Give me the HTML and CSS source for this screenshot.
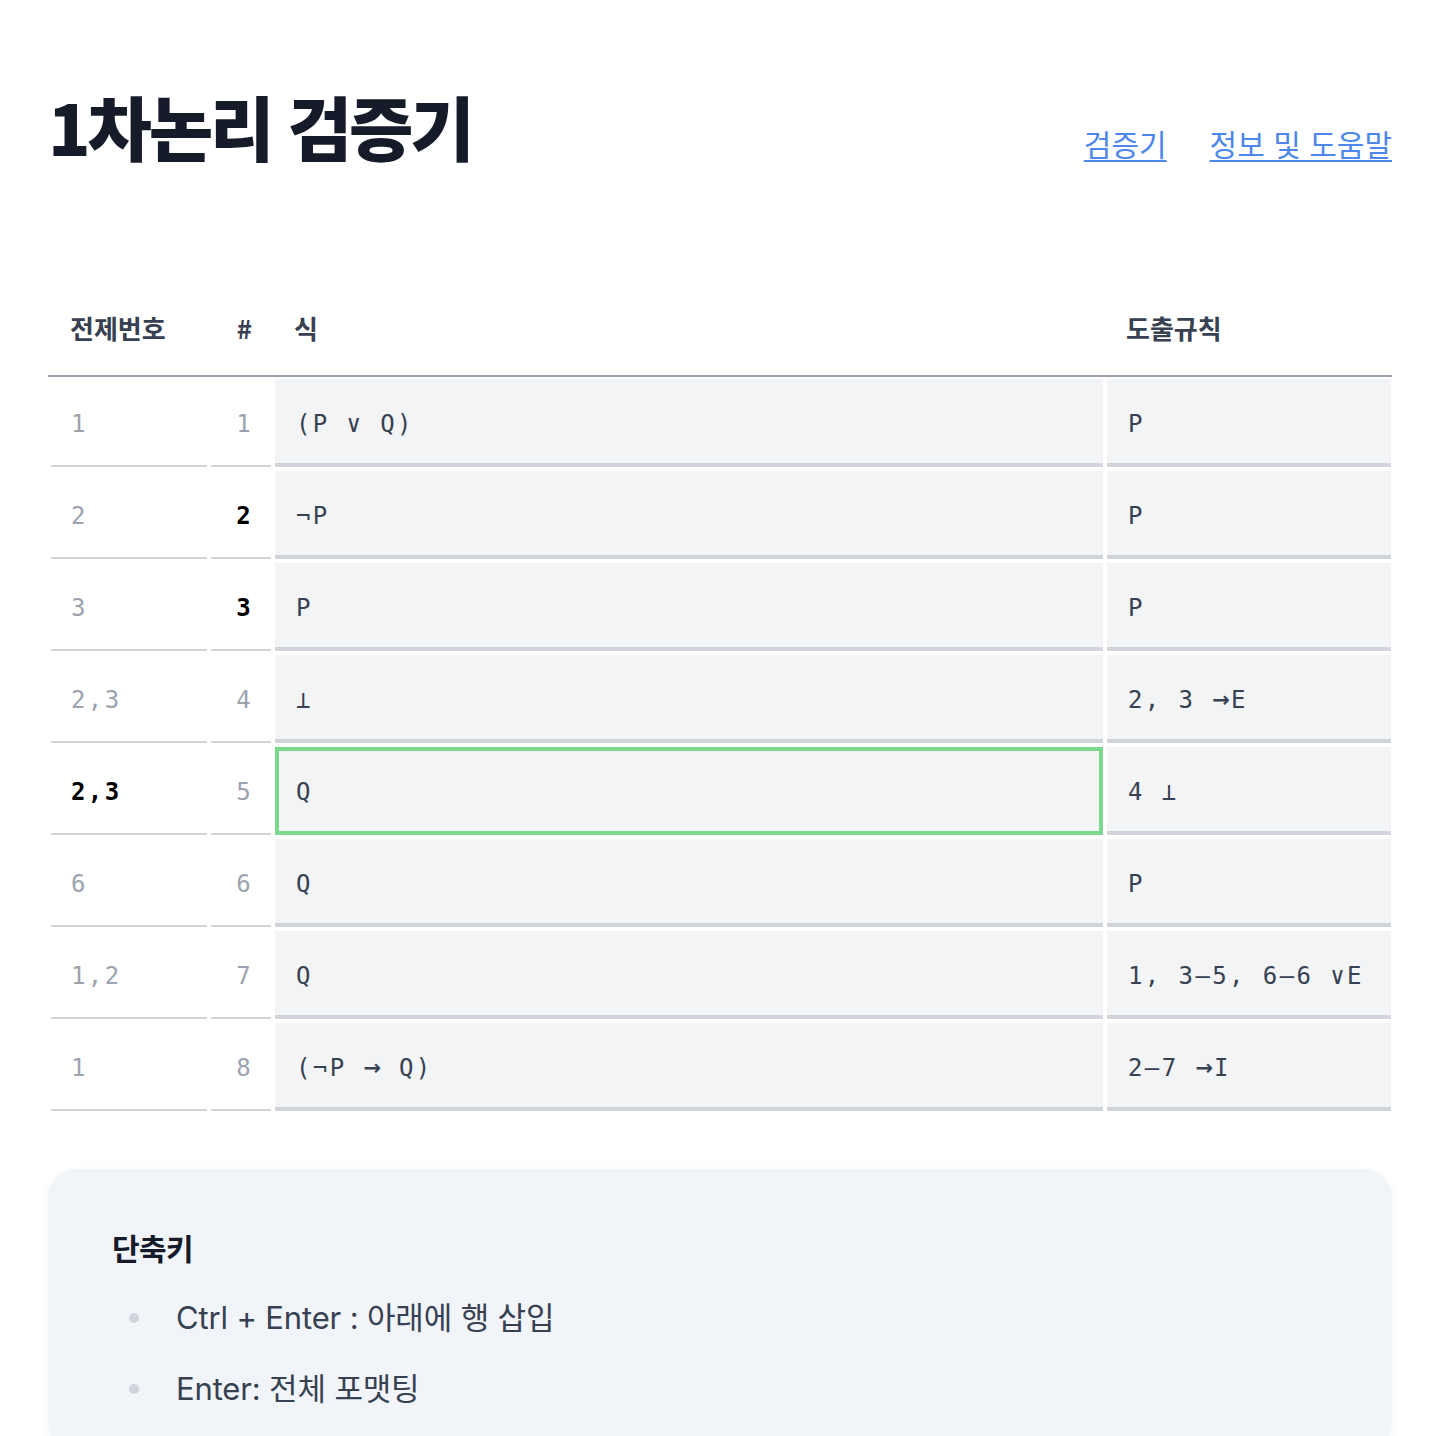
FILE: index.html
```html
<!DOCTYPE html>
<html lang="ko">
<head>
<meta charset="utf-8">
<title>1차논리 검증기</title>
<link rel="stylesheet" href="styles.css">
</head>
<body>
<div class="page">
  <header class="top">
    <h1 class="title">1차논리 검증기</h1>
    <nav class="nav">
      <a href="#" class="nav-link">검증기</a>
      <a href="#" class="nav-link">정보 및 도움말</a>
    </nav>
  </header>

  <section class="proof">
    <div class="row head">
      <div class="th">전제번호</div>
      <div class="th th-num">#</div>
      <div class="th">식</div>
      <div class="th">도출규칙</div>
    </div>
    <div class="head-line"></div>
    <div class="rows">
      <div class="row">
        <div class="cell prem">1</div>
        <div class="cell num">1</div>
        <div class="cell field">(P ∨ Q)</div>
        <div class="cell field">P</div>
      </div>
      <div class="row">
        <div class="cell prem">2</div>
        <div class="cell num strong">2</div>
        <div class="cell field">¬P</div>
        <div class="cell field">P</div>
      </div>
      <div class="row">
        <div class="cell prem">3</div>
        <div class="cell num strong">3</div>
        <div class="cell field">P</div>
        <div class="cell field">P</div>
      </div>
      <div class="row">
        <div class="cell prem">2,3</div>
        <div class="cell num">4</div>
        <div class="cell field">⊥</div>
        <div class="cell field">2, 3 <span class="arrow">→</span>E</div>
      </div>
      <div class="row">
        <div class="cell prem strong">2,3</div>
        <div class="cell num">5</div>
        <div class="cell field active">Q</div>
        <div class="cell field">4 ⊥</div>
      </div>
      <div class="row">
        <div class="cell prem">6</div>
        <div class="cell num">6</div>
        <div class="cell field">Q</div>
        <div class="cell field">P</div>
      </div>
      <div class="row">
        <div class="cell prem">1,2</div>
        <div class="cell num">7</div>
        <div class="cell field">Q</div>
        <div class="cell field">1, 3–5, 6–6 ∨E</div>
      </div>
      <div class="row">
        <div class="cell prem">1</div>
        <div class="cell num">8</div>
        <div class="cell field">(¬P <span class="arrow">→</span> Q)</div>
        <div class="cell field">2–7 <span class="arrow">→</span>I</div>
      </div>
    </div>
  </section>

  <section class="help">
    <h2 class="help-title">단축키</h2>
    <ul class="help-list">
      <li class="help-item">Ctrl + Enter : 아래에 행 삽입</li>
      <li class="help-item">Enter: 전체 포맷팅</li>
    </ul>
  </section>
</div>
</body>
</html>
```

FILE: styles.css
```css
* { box-sizing: border-box; }

html, body {
  margin: 0;
  padding: 0;
  background: #ffffff;
}

body {
  font-family: Inter, "Noto Sans CJK KR", sans-serif;
  color: #374151;
}

.page {
  padding: 0 48px;
}

.top {
  display: flex;
  justify-content: space-between;
  align-items: baseline;
  padding-top: 91px;
}

.title {
  margin: 0;
  font-family: "Noto Sans CJK KR", sans-serif;
  font-size: 70px;
  line-height: 1;
  font-weight: 900;
  letter-spacing: -0.045em;
  color: #161b29;
}

.nav {
  display: flex;
  gap: 43px;
}

.nav-link {
  font-family: "Noto Sans CJK KR", sans-serif;
  font-size: 30px;
  letter-spacing: 0;
  color: #4d87ea;
  text-decoration: underline;
  text-decoration-thickness: 2px;
  text-underline-offset: 4px;
}

.proof {
  margin-top: 122px;
}

.row {
  display: grid;
  grid-template-columns: 156px 60px 828px 284px;
  column-gap: 4px;
  padding: 0 1px 0 3px;
}

.head {
  height: 88px;
  align-items: center;
}

.th {
  font-family: "Noto Sans CJK KR", sans-serif;
  font-size: 26px;
  font-weight: 700;
  color: #374151;
  padding: 0 19px 7px;
}

.th-num {
  text-align: right;
  padding-right: 19px;
}

.head-line {
  height: 2px;
  background: #9ca3af;
  margin-bottom: 2px;
}

.rows {
  display: flex;
  flex-direction: column;
  gap: 4px;
}

.cell {
  height: 88px;
  display: flex;
  align-items: center;
  padding: 4px 20px 0;
  font-family: "DejaVu Sans Mono", monospace;
  font-size: 24px;
  letter-spacing: 0.1em;
  white-space: pre;
}

.arrow {
  font-family: "DejaVu Sans", sans-serif;
  font-size: 21px;
  font-weight: 700;
  letter-spacing: 0.05em;
}

.prem, .num {
  color: #9ca3af;
  border-bottom: 2px solid #d1d5db;
}

.num {
  justify-content: flex-end;
  padding-right: 18px;
}

.strong {
  color: #000000;
  font-weight: 700;
}

.field {
  background: #f3f4f6;
  color: #374151;
  border-bottom: 4px solid #d1d5db;
  padding-left: 21px;
  padding-top: 6px;
}

.field.active {
  border: 4px solid #7ad98c;
  padding-left: 17px;
  padding-top: 2px;
}

.help {
  margin-top: 58px;
  background: #f1f5f9;
  border-radius: 28px;
  padding: 56px 64px 40px;
  box-shadow: 0 4px 14px rgba(0, 0, 0, 0.04);
}

.help-title {
  margin: 0;
  font-family: "Noto Sans CJK KR", sans-serif;
  font-size: 30px;
  line-height: 44px;
  font-weight: 700;
  letter-spacing: -0.02em;
  color: #161b29;
}

.help-list {
  list-style: none;
  margin: 0;
  padding: 0;
}

.help-item {
  display: flex;
  align-items: center;
  margin-top: 26px;
  font-size: 31px;
  line-height: 45px;
  color: #374151;
  letter-spacing: -0.005em;
}

.help-item::before {
  content: "";
  flex: none;
  width: 10px;
  height: 10px;
  border-radius: 50%;
  background: #d1d5db;
  margin-left: 17px;
  margin-right: 37px;
}
```
